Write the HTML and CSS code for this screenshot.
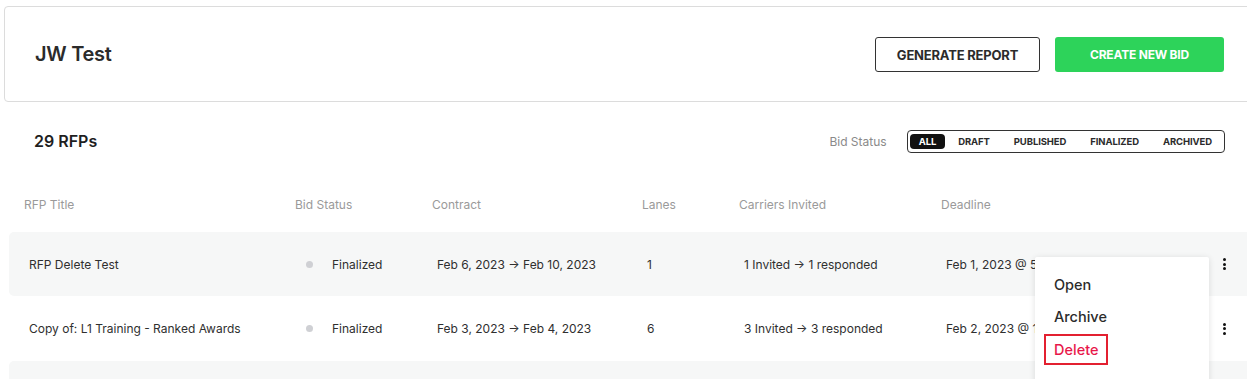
FILE: index.html
```html
<!DOCTYPE html>
<html lang="en">
<head>
    <meta charset="UTF-8">
    <meta name="viewport" content="width=device-width, initial-scale=1.0">
    <title>JW Test - RFPs</title>
    <link rel="stylesheet" href="styles.css">
</head>
<body>
    <div class="page">
        <header class="top-card">
            <h1>JW Test</h1>
            <div class="actions">
                <button class="btn btn-outline">GENERATE REPORT</button>
                <button class="btn btn-green">CREATE NEW BID</button>
            </div>
        </header>

        <section class="toolbar">
            <h2>29 RFPs</h2>
            <div class="filter">
                <span class="filter-label">Bid Status</span>
                <div class="segments">
                    <span class="seg active">ALL</span>
                    <span class="seg">DRAFT</span>
                    <span class="seg">PUBLISHED</span>
                    <span class="seg">FINALIZED</span>
                    <span class="seg">ARCHIVED</span>
                </div>
            </div>
        </section>

        <div class="table">
            <div class="thead">
                <span>RFP Title</span>
                <span>Bid Status</span>
                <span>Contract</span>
                <span>Lanes</span>
                <span>Carriers Invited</span>
                <span>Deadline</span>
                <span></span>
            </div>

            <div class="row shaded">
                <span>RFP Delete Test</span>
                <span class="status"><i class="dot"></i>Finalized</span>
                <span>Feb 6, 2023 &rarr; Feb 10, 2023</span>
                <span>1</span>
                <span>1 Invited &rarr; 1 responded</span>
                <span class="deadline">Feb 1, 2023 @ 5:00 PM</span>
                <span class="kebab"><i></i><i></i><i></i></span>

                <div class="menu">
                    <div class="menu-item">Open</div>
                    <div class="menu-item">Archive</div>
                    <div class="menu-item danger"><span>Delete</span></div>
                </div>
            </div>

            <div class="row">
                <span>Copy of: L1 Training - Ranked Awards</span>
                <span class="status"><i class="dot"></i>Finalized</span>
                <span>Feb 3, 2023 &rarr; Feb 4, 2023</span>
                <span>6</span>
                <span>3 Invited &rarr; 3 responded</span>
                <span class="deadline">Feb 2, 2023 @ 10:00 AM</span>
                <span class="kebab"><i></i><i></i><i></i></span>
            </div>

            <div class="row shaded"></div>
        </div>
    </div>
</body>
</html>
```

FILE: styles.css
```css
* {
    margin: 0;
    padding: 0;
    box-sizing: border-box;
    font-family: Inter, "Noto Sans", sans-serif;
}

body {
    background-color: #fff;
    color: #333;
    overflow: hidden;
}

.page {
    width: 1256px;
    padding: 6px 0 0 4px;
}


/* header card */
.top-card {
    height: 96px;
    border: 1px solid #dcdcdc;
    border-radius: 4px;
    display: flex;
    align-items: center;
    justify-content: space-between;
    padding: 0 31px 0 30px;
    margin-right: -4px;
}

.top-card h1 {
    font-size: 20px;
    font-weight: 600;
    color: #2b2b2b;
    letter-spacing: -0.3px;
}

.actions {
    display: flex;
    gap: 15px;
    margin-top: 1px;
    margin-right: 4px;
}

.btn {
    height: 35px;
    border-radius: 3px;
    font-size: 13px;
    font-weight: 700;
    letter-spacing: -0.2px;
    cursor: pointer;
}

.btn-outline {
    width: 165px;
    background-color: #fff;
    border: 1px solid #333;
    color: #2b2b2b;
}

.btn-green {
    width: 169px;
    background-color: #2dd35a;
    border: none;
    color: #fff;
    font-size: 12px;
}


/* count + filter */
.toolbar {
    display: flex;
    align-items: center;
    justify-content: space-between;
    height: 50px;
    margin-top: 14px;
    padding: 0 31px 0 30px;
}

.toolbar h2 {
    font-size: 16px;
    font-weight: 600;
    color: #1f1f1f;
}

.filter {
    display: flex;
    align-items: center;
    gap: 20px;
}

.filter-label {
    font-size: 12px;
    color: #8a8a8a;
}

.segments {
    display: flex;
    align-items: center;
    height: 23px;
    border: 1px solid #333;
    border-radius: 4px;
    padding: 0 12px 0 2px;
}

.seg {
    font-size: 9.5px;
    font-weight: 700;
    color: #2b2b2b;
    padding: 2px 10px;
    margin-right: 4px;
    letter-spacing: -0.1px;
}

.seg:last-child {
    margin-right: 0;
    padding-right: 0;
}

.seg.active {
    background-color: #111;
    color: #fff;
    border-radius: 4px;
    padding: 2px 9px;
    margin-right: 3px;
}


/* table */
.table {
    margin-top: 11px;
    padding-left: 5px;
}

.thead,
.row {
    display: grid;
    grid-template-columns: 271px 137px 210px 97px 202px 1fr 40px;
    align-items: center;
}

.thead {
    height: 55px;
    padding-left: 15px;
    font-size: 12px;
    color: #9a9a9a;
}

.row {
    position: relative;
    height: 64px;
    padding-left: 20px;
    font-size: 12px;
    color: #2f2f2f;
    border-radius: 5px;
}

.row + .row {
    height: 65px;
}

.row.shaded {
    background-color: #f6f7f7;
}

.status {
    display: flex;
    align-items: center;
    padding-left: 6px;
}

.dot {
    width: 7px;
    height: 7px;
    border-radius: 50%;
    background-color: #cfd0d4;
    margin-right: 19px;
}

.deadline {
    width: 89px;
    overflow: hidden;
    white-space: nowrap;
}

.kebab {
    display: flex;
    flex-direction: column;
    align-items: center;
    gap: 1.5px;
    margin-left: -24px;
}

.kebab i {
    width: 3px;
    height: 3px;
    border-radius: 50%;
    background-color: #111;
}


/* row menu */
.menu {
    position: absolute;
    top: 25px;
    left: 1026px;
    width: 174px;
    height: 130px;
    background-color: #fff;
    box-shadow: 0 1px 6px rgba(0, 0, 0, 0.12);
    border-radius: 2px;
    padding-top: 11px;
    z-index: 2;
}

.menu-item {
    height: 32px;
    display: flex;
    align-items: center;
    padding-left: 19px;
    font-size: 14.5px;
    font-weight: 500;
    color: #2b2b2b;
}

.menu-item.danger {
    padding-left: 9px;
    height: 34px;
}

.menu-item.danger span {
    color: #e8174a;
    border: 2px solid #e32030;
    padding: 4px 8px;
    line-height: 19px;
}
```
